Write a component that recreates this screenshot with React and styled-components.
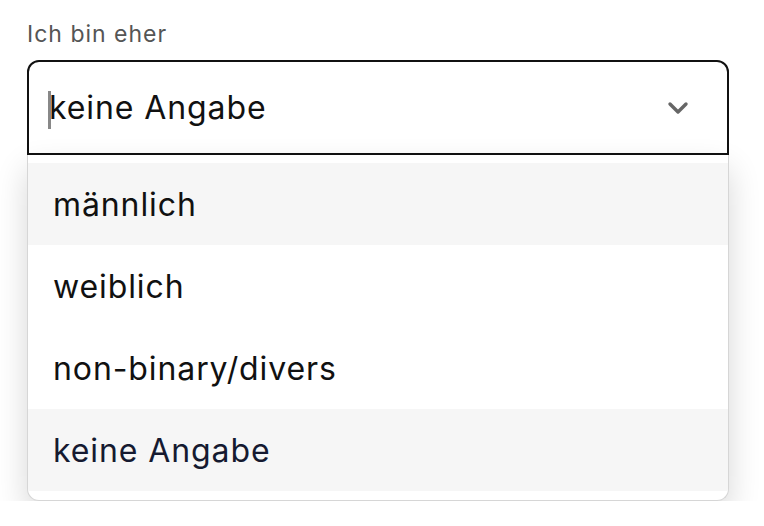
import React from 'react';
import styled, { createGlobalStyle } from 'styled-components';

const GlobalStyle = createGlobalStyle`
  html, body {
    margin: 0;
    background: #fff;
    font-family: Inter, "Noto Sans", sans-serif;
  }
`;

const Page = styled.div`
  padding: 19px 35px 0 27px;
`;

const Label = styled.div`
  font-size: 23px;
  line-height: 30px;
  letter-spacing: 1px;
  color: #555;
  margin-bottom: 11px;
`;

const Field = styled.div`
  position: relative;
`;

const Control = styled.div`
  display: flex;
  align-items: center;
  justify-content: space-between;
  height: 95px;
  box-sizing: border-box;
  border: 2px solid #111;
  border-radius: 12px 12px 0 0;
  padding: 0 38px 0 19px;
  font-size: 32px;
  letter-spacing: 0.9px;
  color: #111;
`;

const Value = styled.span`
  position: relative;
  padding-left: 1px;

  &::before {
    content: '';
    position: absolute;
    left: 0;
    top: 3px;
    bottom: -2px;
    width: 3px;
    background: #888;
  }
`;

const Chevron = () => (
  <svg width="22" height="14" viewBox="0 0 22 14">
    <path d="M3 3 L11 11 L19 3" fill="none" stroke="#666" strokeWidth="3.4" strokeLinecap="round" strokeLinejoin="round" />
  </svg>
);

const Menu = styled.ul`
  list-style: none;
  margin: 0;
  padding: 8px 0 9px;
  border: 1px solid #d6d6d6;
  border-top: none;
  border-radius: 0 0 12px 12px;
  box-shadow: 0 14px 32px rgba(0, 0, 0, 0.16);
  background: #fff;
`;

const Option = styled.li`
  display: flex;
  align-items: center;
  height: 82px;
  padding-left: 25px;
  font-size: 32px;
  letter-spacing: 0.9px;
  color: ${({ $selected }) => ($selected ? '#151a30' : '#111')};
  background: ${({ $shaded }) => ($shaded ? '#f6f6f6' : '#fff')};
`;

const options = [
  { label: 'männlich', shaded: true },
  { label: 'weiblich' },
  { label: 'non-binary/divers' },
  { label: 'keine Angabe', shaded: true, selected: true },
];

const App = () => (
  <>
    <GlobalStyle />
    <Page>
      <Label>Ich bin eher</Label>
      <Field>
        <Control>
          <Value>keine Angabe</Value>
          <Chevron />
        </Control>
        <Menu>
          {options.map((o) => (
            <Option key={o.label} $shaded={o.shaded} $selected={o.selected}>
              {o.label}
            </Option>
          ))}
        </Menu>
      </Field>
    </Page>
  </>
);

export default App;
